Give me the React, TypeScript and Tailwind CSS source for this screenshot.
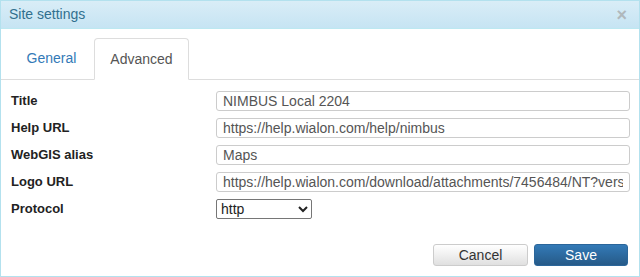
const fields = [
  { label: 'Title', value: 'NIMBUS Local 2204' },
  { label: 'Help URL', value: 'https://help.wialon.com/help/nimbus' },
  { label: 'WebGIS alias', value: 'Maps' },
  { label: 'Logo URL', value: 'https://help.wialon.com/download/attachments/7456484/NT?version=1' },
];

export default function App() {
  return (
    <div
      className="w-[640px] h-[277px] flex flex-col bg-white border border-[#b3e1ee] text-[#333]"
      style={{ fontFamily: '"Liberation Sans", Arial, sans-serif' }}
    >
      {/* Header */}
      <div className="h-[28px] flex items-center justify-between pl-[8px] pr-[12px] bg-gradient-to-b from-[#d9edf7] to-[#c6e4f3] border-b border-[#bce8f1]">
        <span className="text-[14px] text-[#31708f]">Site settings</span>
        <span className="text-[18px] leading-none font-bold text-[#b0b8bc]">×</span>
      </div>

      {/* Tabs */}
      <div className="mt-[9px] h-[42px] flex items-end border-b border-[#ddd] pl-[8px]">
        <div className="h-[41px] w-[85px] flex items-center justify-center text-[14px] text-[#337ab7]">
          General
        </div>
        <div className="h-[42px] w-[95px] -mb-px flex items-center justify-center text-[14px] text-[#555] bg-white border border-[#ddd] border-b-white rounded-t-[4px]">
          Advanced
        </div>
      </div>

      {/* Form */}
      <div className="flex flex-col gap-[7px] pt-[11px] pl-[10px] pr-[9px]">
        {fields.map((f) => (
          <div key={f.label} className="flex items-center h-[20px]">
            <div className="w-[205px] text-[13px] font-bold text-[#222]">{f.label}</div>
            <input
              readOnly
              value={f.value}
              className="flex-1 min-w-0 h-[20px] border border-[#ccc] rounded-[3px] px-[6px] text-[14px] text-[#555] outline-none"
              style={{ fontFamily: '"Liberation Sans", Arial, sans-serif' }}
            />
          </div>
        ))}
        <div className="flex items-center h-[20px]">
          <div className="w-[205px] text-[13px] font-bold text-[#222]">Protocol</div>
          <select
            defaultValue="http"
            className="w-[96px] h-[20px] border border-[#767676] rounded-[2px] text-[14px] text-[#222] bg-white appearance-auto"
            style={{ fontFamily: '"Liberation Sans", Arial, sans-serif' }}
          >
            <option value="http">http</option>
            <option value="https">https</option>
          </select>
        </div>
      </div>

      {/* Footer */}
      <div className="mt-auto mb-[10px] flex justify-end gap-[6px] pr-[11px]">
        <button className="w-[95px] h-[22px] text-[14px] text-[#333] border border-[#ccc] rounded-[3px] bg-gradient-to-b from-white to-[#e0e0e0]">
          Cancel
        </button>
        <button className="w-[94px] h-[22px] text-[14px] text-white border border-[#2b669a] rounded-[3px] bg-gradient-to-b from-[#337ab7] to-[#265a88]">
          Save
        </button>
      </div>
    </div>
  );
}
